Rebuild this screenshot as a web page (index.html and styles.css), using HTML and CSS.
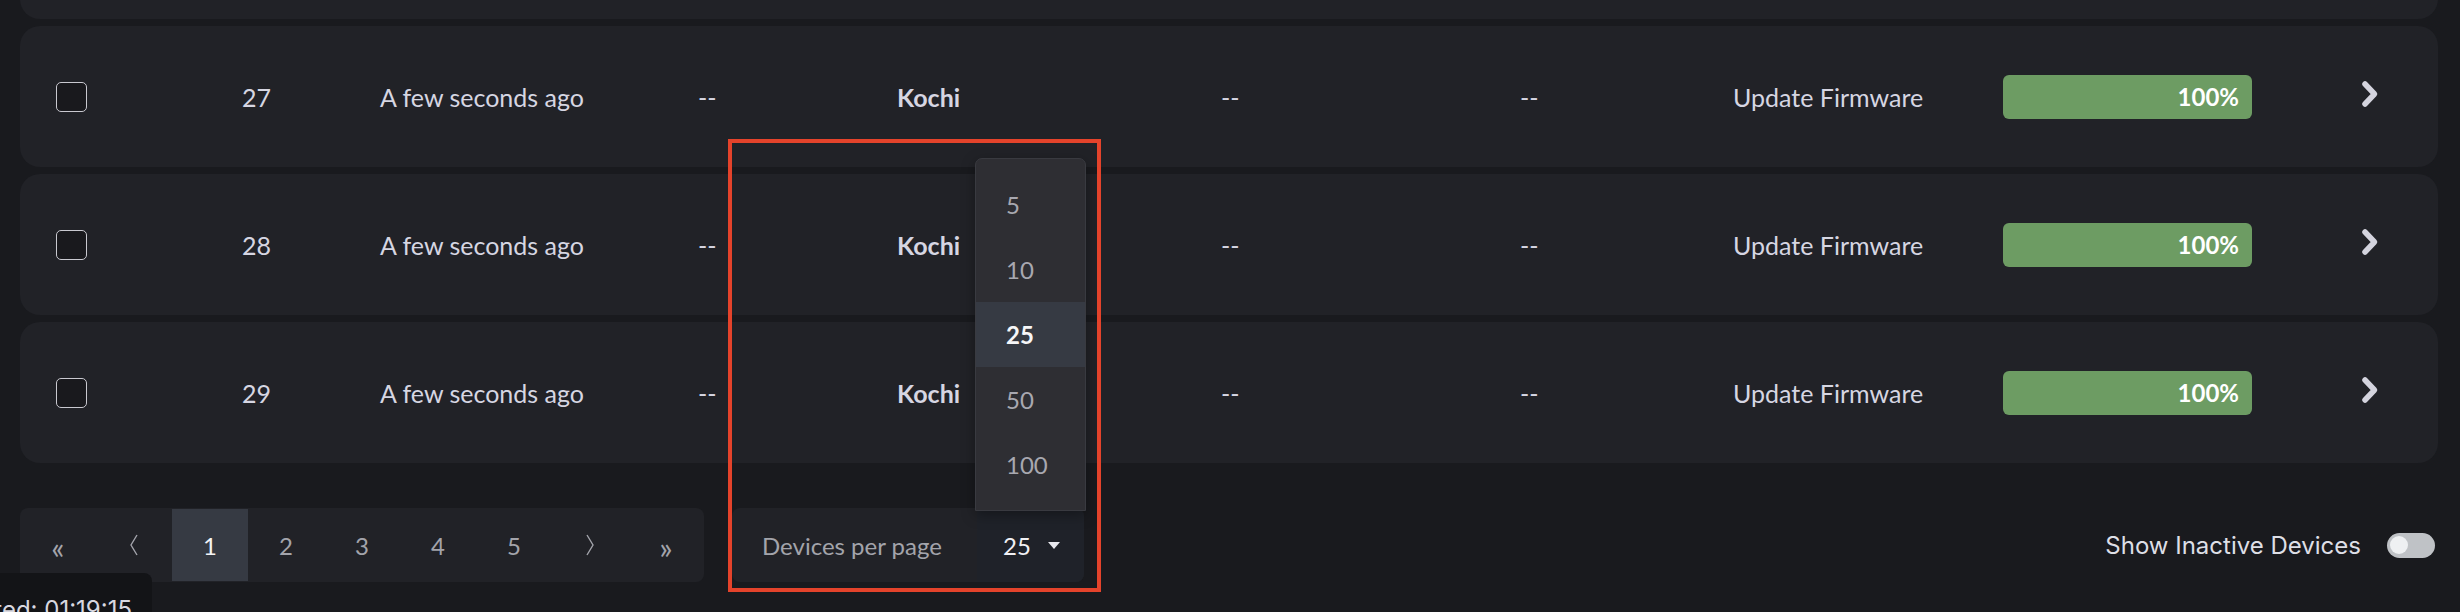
FILE: index.html
```html
<!DOCTYPE html>
<html lang="en">
<head>
<meta charset="utf-8">
<title>Devices</title>
<link rel="stylesheet" href="styles.css">
</head>
<body>
<div class="page">
  <div class="list">
    <div class="row"></div>
    <div class="row">
      <span class="cell"><input type="checkbox" class="check"></span>
      <span class="cell">27</span>
      <span class="cell">A few seconds ago</span>
      <span class="cell">--</span>
      <span class="cell bold">Kochi</span>
      <span class="cell">--</span>
      <span class="cell">--</span>
      <span class="cell">Update Firmware</span>
      <span class="cell"><span class="bar"><span class="bar-fill" style="width:100%">100%</span></span></span>
      <span class="cell"><svg class="chev" width="18" height="28" viewBox="0 0 18 28"><path d="M4 4 L13.5 14 L4 24" /></svg></span>
    </div>
    <div class="row">
      <span class="cell"><input type="checkbox" class="check"></span>
      <span class="cell">28</span>
      <span class="cell">A few seconds ago</span>
      <span class="cell">--</span>
      <span class="cell bold">Kochi</span>
      <span class="cell">--</span>
      <span class="cell">--</span>
      <span class="cell">Update Firmware</span>
      <span class="cell"><span class="bar"><span class="bar-fill" style="width:100%">100%</span></span></span>
      <span class="cell"><svg class="chev" width="18" height="28" viewBox="0 0 18 28"><path d="M4 4 L13.5 14 L4 24" /></svg></span>
    </div>
    <div class="row">
      <span class="cell"><input type="checkbox" class="check"></span>
      <span class="cell">29</span>
      <span class="cell">A few seconds ago</span>
      <span class="cell">--</span>
      <span class="cell bold">Kochi</span>
      <span class="cell">--</span>
      <span class="cell">--</span>
      <span class="cell">Update Firmware</span>
      <span class="cell"><span class="bar"><span class="bar-fill" style="width:100%">100%</span></span></span>
      <span class="cell"><svg class="chev" width="18" height="28" viewBox="0 0 18 28"><path d="M4 4 L13.5 14 L4 24" /></svg></span>
    </div>
  </div>

  <div class="footer">
    <nav class="pager">
      <span class="pg small">&laquo;</span>
      <span class="pg"><svg class="ang" width="10" height="22" viewBox="0 0 10 22"><path d="M8 1 L2 11 L8 21" /></svg></span>
      <span class="pg active">1</span>
      <span class="pg">2</span>
      <span class="pg">3</span>
      <span class="pg">4</span>
      <span class="pg">5</span>
      <span class="pg"><svg class="ang" width="10" height="22" viewBox="0 0 10 22"><path d="M2 1 L8 11 L2 21" /></svg></span>
      <span class="pg small">&raquo;</span>
    </nav>

    <div class="perpage">
      <span class="pp-label">Devices per page</span>
      <div class="pp-select">
        <span>25</span>
        <svg class="caret" width="12" height="7" viewBox="0 0 12 7"><path d="M0 0 H12 L6 7 Z" /></svg>
      </div>
      <ul class="pp-menu">
        <li class="pp-item">5</li>
        <li class="pp-item">10</li>
        <li class="pp-item selected">25</li>
        <li class="pp-item">50</li>
        <li class="pp-item">100</li>
      </ul>
      <div class="annot"></div>
    </div>

    <div class="inactive">
      <span class="inactive-label">Show Inactive Devices</span>
      <span class="toggle"><span class="knob"></span></span>
    </div>
  </div>
</div>
<div class="tooltip">Last updated: 01:19:15</div>
</body>
</html>
```

FILE: styles.css
```css
* { box-sizing: border-box; }

html, body {
  margin: 0;
  padding: 0;
  background: #191a1e;
  overflow: hidden;
  height: 612px;
}

body {
  font-family: "Lato", "Noto Sans", sans-serif;
  font-size: 25px;
  color: #d6d6e2;
}

.page {
  padding: 0 22px 0 20px;
}

.list {
  display: flex;
  flex-direction: column;
  gap: 7px;
  margin-top: -122px;
}

.row {
  display: grid;
  grid-template-columns: 186px 138px 318px 199px 324px 299px 213px 270px 358px 18px;
  align-items: center;
  height: 141px;
  padding-left: 36px;
  background: #212227;
  border-radius: 20px;
}

.cell {
  display: flex;
  align-items: center;
  white-space: nowrap;
}

.bold { font-weight: 700; }

.check {
  appearance: none;
  -webkit-appearance: none;
  margin: 0;
  width: 31px;
  height: 30px;
  border: 1.5px solid #c9c9d0;
  border-radius: 5px;
  background: #19191d;
}

.bar {
  display: block;
  width: 249px;
  height: 44px;
  border-radius: 6px;
  overflow: hidden;
  background: #2c2d33;
}

.bar-fill {
  display: block;
  height: 100%;
  background: #6d9c63;
  color: #ffffff;
  font-size: 24px;
  font-weight: 700;
  line-height: 44px;
  text-align: right;
  padding-right: 13px;
}

.chev {
  margin-top: -6px;
}
.chev path {
  fill: none;
  stroke: #d4d4de;
  stroke-width: 5.5;
  stroke-linecap: round;
  stroke-linejoin: round;
}

.footer {
  display: flex;
  align-items: center;
  margin-top: 45px;
  height: 74px;
}

.pager {
  display: flex;
  height: 74px;
  background: #212227;
  border-radius: 8px;
  overflow: hidden;
}

.pg {
  width: 76px;
  display: flex;
  align-items: center;
  justify-content: center;
  color: #a3a4ab;
  font-size: 24px;
}

.pg.small {
  font-size: 31px;
  padding-top: 3px;
}

.pg.active {
  background: #363a43;
  color: #f4f4f6;
  margin: 1px 0;
}

.ang path {
  fill: none;
  stroke: #a3a4ab;
  stroke-width: 1.4;
}

.perpage {
  position: relative;
  display: flex;
  align-items: center;
  margin-left: 28px;
  width: 352px;
  height: 74px;
  background: #212227;
  border-radius: 8px;
  font-size: 24px;
}

.pp-label {
  padding-left: 30px;
  color: #a3a4ab;
}

.pp-select {
  margin-left: auto;
  width: 107px;
  height: 100%;
  display: flex;
  align-items: center;
  padding-left: 26px;
  gap: 17px;
  background: #1f2229;
  border-radius: 0 8px 8px 0;
  color: #f0f0f4;
}

.caret path { fill: #e8e8ee; }

.pp-menu {
  position: absolute;
  left: 243px;
  top: -350px;
  width: 111px;
  margin: 0;
  padding: 13px 0;
  list-style: none;
  background: #2e2e33;
  border: 1px solid #393a40;
  border-radius: 7px 7px 0 0;
  box-shadow: 0 4px 14px rgba(0, 0, 0, 0.35);
}

.pp-item {
  height: 65px;
  display: flex;
  align-items: center;
  padding-left: 30px;
  color: #a8a8b0;
}

.pp-item.selected {
  background: #363a43;
  color: #f6f6f8;
  font-weight: 700;
}

.annot {
  position: absolute;
  left: -4px;
  top: -369px;
  width: 373px;
  height: 453px;
  border: 4px solid #e4432b;
  pointer-events: none;
}

.inactive {
  margin-left: auto;
  margin-right: 3px;
  display: flex;
  align-items: center;
  gap: 26px;
}

.inactive-label {
  font-family: "Inter", "Liberation Sans", sans-serif;
  font-size: 24px;
  color: #dedfe6;
}

.toggle {
  position: relative;
  display: block;
  width: 48px;
  height: 25px;
  border-radius: 13px;
  background: #bfc2c6;
}

.knob {
  position: absolute;
  left: 3px;
  top: 3.5px;
  width: 18px;
  height: 18px;
  border-radius: 50%;
  background: #eef0f2;
}

.tooltip {
  position: absolute;
  top: 573px;
  right: 2308px;
  padding: 22px 20px 20px 20px;
  background: #131417;
  border-radius: 8px;
  font-family: "Inter", "Liberation Sans", sans-serif;
  font-size: 24px;
  color: #d8d8e0;
  white-space: nowrap;
}
```
